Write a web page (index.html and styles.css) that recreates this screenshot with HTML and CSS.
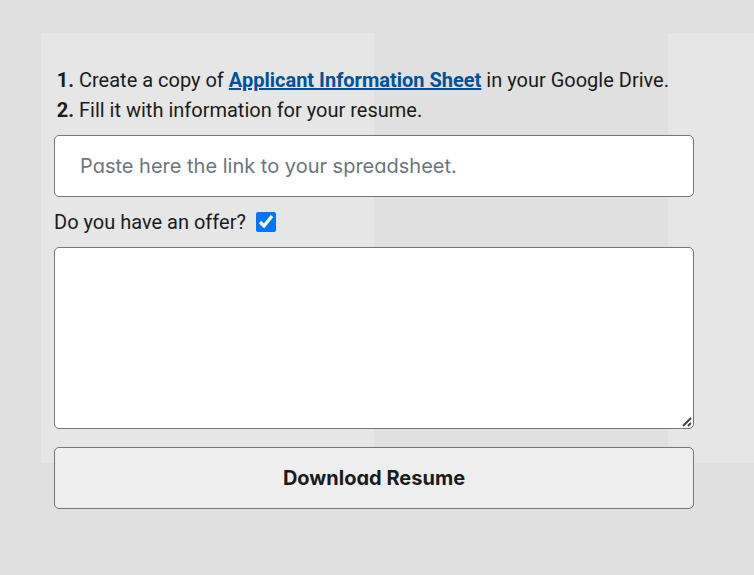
FILE: index.html
```html
<!DOCTYPE html>
<html lang="en">
<head>
<meta charset="utf-8">
<title>Resume generator</title>
<link rel="stylesheet" href="styles.css">
</head>
<body>
<main class="page">
  <form class="form">
    <ol class="steps">
      <li>Create a copy of <a href="#sheet">Applicant Information Sheet</a> in your Google Drive.</li>
      <li>Fill it with information for your resume.</li>
    </ol>
    <input class="field link-field" type="url" aria-label="Spreadsheet link" placeholder="Paste here the link to your spreadsheet.">
    <div class="offer">
      <label for="offer">Do you have an offer?</label>
      <input class="check" id="offer" type="checkbox" checked>
    </div>
    <textarea class="field offer-text" aria-label="Offer text"></textarea>
    <button class="field download" type="button">Download Resume</button>
  </form>
</main>
</body>
</html>
```

FILE: styles.css
```css
* {
  box-sizing: border-box;
}

body {
  margin: 0;
  min-height: 100vh;
  background-color: #e0e0e0;
  background-image: linear-gradient(#e6e6e6, #e6e6e6), linear-gradient(#e6e6e6, #e6e6e6);
  background-repeat: no-repeat;
  background-position: 41px 33px, 668px 33px;
  background-size: 333px 430px, 333px 430px;
  color: #1b1b1b;
  font: 20px/30px Roboto, sans-serif;
}

.page {
  padding: 65px 60px 66px 54px;
}

.form {
  display: flex;
  flex-direction: column;
}

.steps {
  margin: 0 0 10px;
  padding-left: 25px;
}

.steps li::marker {
  font-weight: 700;
}

.steps a {
  color: #00519e;
  font-weight: 700;
}

.field {
  width: 100%;
  margin: 0;
  border: 1px solid #767676;
  border-radius: 5px;
  background: #fff;
  color: #1b1b1b;
  font: 20px/30px Inter, sans-serif;
  font-feature-settings: "cv11";
}

.link-field {
  height: 62px;
  padding: 0 25px;
}

.link-field::placeholder {
  color: #6c757d;
}

.offer {
  display: flex;
  align-items: center;
  gap: 10px;
  margin: 10px 0;
}

.check {
  width: 20px;
  height: 20px;
  margin: 0;
}

.offer-text {
  display: block;
  height: 182px;
  padding: 15px 25px;
  resize: both;
}

.offer-text::-webkit-resizer {
  background: url("data:image/svg+xml,%3Csvg xmlns='http://www.w3.org/2000/svg' width='15' height='15'%3E%3Cpath d='M4 13 12 5M9 13 12 10' stroke='%23444' stroke-width='2' fill='none' transform='translate(1 0)'/%3E%3C/svg%3E") no-repeat right bottom;
}

.download {
  height: 62px;
  margin-top: 18px;
  background: #eee;
  font-weight: 700;
}
```
